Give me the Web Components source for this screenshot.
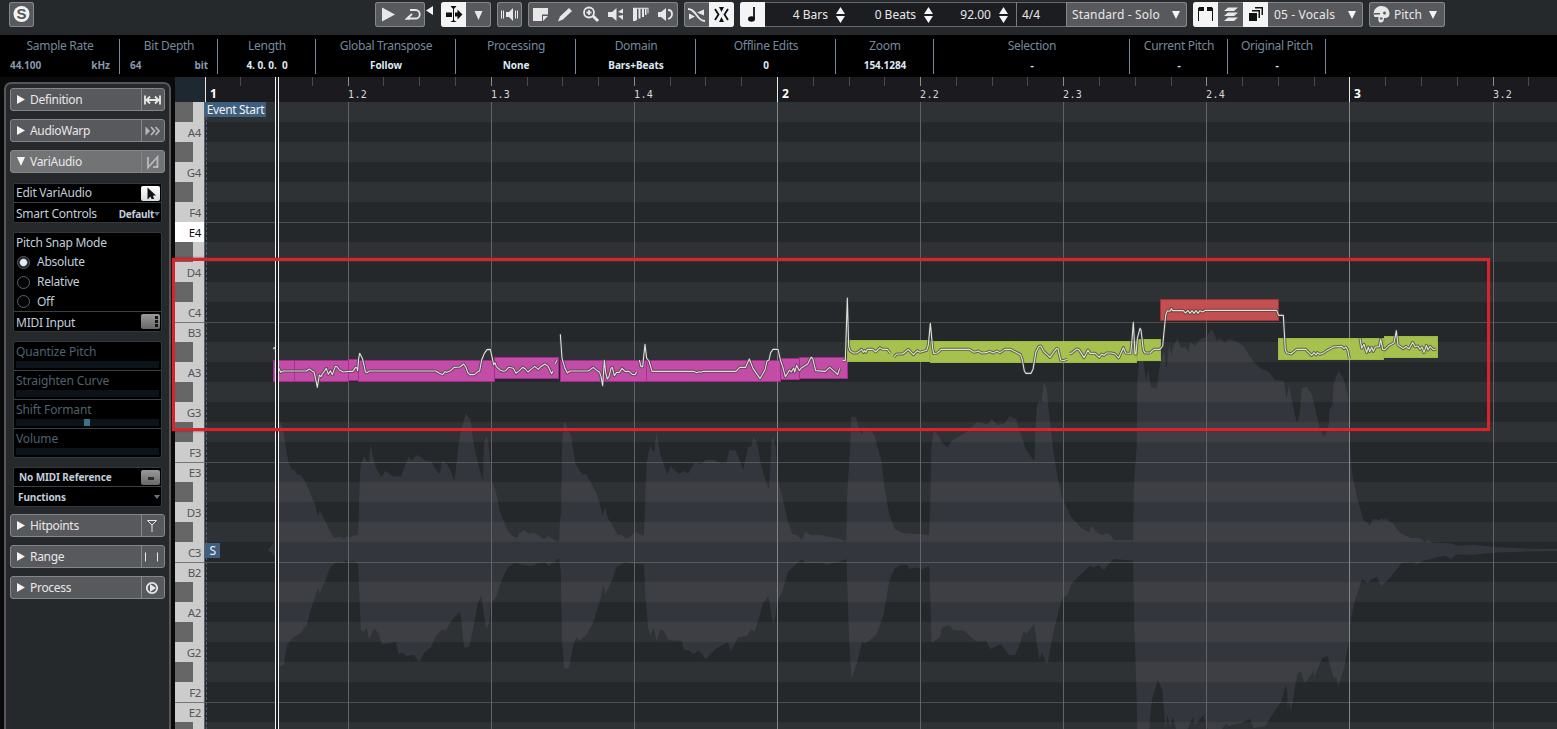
<!DOCTYPE html>
<html lang="en">
<head>
<meta charset="utf-8">
<title>Sample Editor</title>
<style>
  html, body { margin: 0; height: 100%; overflow: hidden; background: #0a0a0b; }
  body { font: 12px/16px "Noto Sans", "Open Sans", sans-serif; color: #e8e8e8; }
</style>
</head>
<body>
<sample-editor></sample-editor>

<script>
function define(name, render) {
	customElements.define(name, class extends HTMLElement {
		constructor() {
			super();
			this.attachShadow({ mode: 'open' });
		}

		connectedCallback() {
			this.shadowRoot.innerHTML = render(this);
		}
	});
}

const icons = {
	logo: '<circle cx="12.5" cy="12" r="8" fill="#f2f2f2"/><text x="12.5" y="17.3" text-anchor="middle" font-family="Liberation Sans" font-weight="bold" font-size="15" fill="#555">S</text>',
	play: '<path d="M7 5.500l13 7-13 7z"/>',
	loop: '<path d="M10 8h5.500a4.200 4.200 0 0 1 0 8.500H7l5-4.500" class="l2"/><path d="M5 17.400l5-4.400v4.400z"/>',
	autoscroll: '<path d="M5 10.500h6v4.500H5zM14 10.500h2.500V7.500l5 5-5 5v-3H14zM9.500 4h6l-2 2.500h-2zM9.500 20h6l-2-1.500h-2z"/><path d="M12.500 5v15" class="l"/>',
	down: '<path d="M8.500 9h8l-4 9z"/>',
	speaker: '<path d="M9 10h3l4-4v13l-4-4H9z"/><path d="M4.500 8.500v8M6.500 8.500v8M18.500 8.500v8M20.500 8.500v8" class="l"/>',
	range: '<path d="M5 6h15v6.500h-6V19H5z"/><path d="M15 19v-5h5z"/>',
	pencil: '<path d="M5 19.500l2-5 9-8.500 3 3-9 8.500z"/>',
	zoom: '<circle cx="11" cy="10.500" r="5" class="l2"/><path d="M15 14l5 5" class="l3"/><path d="M8.500 10.500h5M11 8v5" class="l2"/>',
	audition: '<path d="M5 10h4l4.500-4v13L9 15H5zM15 10l5-3.500v5zM15 14l5-1v5z"/>',
	warp: '<path d="M5 6h3l1 1v11l-2 1H5zM10.500 6.500h2v10h-2zM14 6.500h2v8.500h-2zM17 6.500h1.500v6.500H17zM19.500 6.500h1v5h-1z"/><path d="M5 5.800h15.500v1H5z"/>',
	scrub: '<path d="M5 10h3l5-4v13l-5-4H5z"/><path d="M15 8c3 0 4 2 4 4s-1 4-4 5" class="l2"/>',
	crossfade: '<path d="M4 7c9 0 8 12 17 12" class="l2"/><path d="M5 11.500l6 3-6 3M13 10.500l7-3v6z"/>',
	snap: '<path d="M6 7l3.500 5.500L6 18M19 7l-3.500 5.500L19 18" class="l2"/><path d="M10 5h5l-2.500 5zM10 20h5l-2.500-5z"/>',
	note: '<path d="M14 5v12" class="l2"/><ellipse cx="11.500" cy="17" rx="3.500" ry="2.800"/>',
	bounds: '<path d="M5.500 19V6h5M14.500 6h5v13" class="l"/><path d="M6 5h5v4H6zM14 5h5v4h-5z"/>',
	layers: '<path d="M10 5.500h10L16 9H6zM10 10.500h10L16 14H6zM10 15.500h10L16 19H6z"/>',
	parts: '<path d="M6 11h8v8H6zM9 8h8v8h-1.500V9.500H9zM12 5h8v8h-1.500V6.500H12z"/>',
	palette: '<path d="M12 4c5 0 8.500 3 8.500 7.500 0 4-3 5-5.500 4.500 0 4-2 4.500-3.500 4.500-2 0-2.500-2-2-5.500H5.500C3 9 7 4 12 4z"/><circle cx="15.500" cy="11" r="1.500" fill="#58595c"/><path d="M5 11h6v1.500H5zM11 15.500h2.500v2H11z" fill="#58595c"/>',
	definition: '<path d="M3 7.500v9M18 7.500v9M4.500 12h12M8 8.500L4.500 12 8 15.500M13 8.500l3.500 3.500-3.500 3.500" class="l2"/>',
	chevrons: '<path d="M3.500 7.500l4.500 4.500-4.500 4.500z" opacity=".65"/><path d="M9 8l3.500 4L9 16M13.500 8l3.500 4-3.500 4" class="l2" opacity=".65"/>',
	vari: '<path d="M6 7v10.500L15.500 7v10.500" class="l2" opacity=".6"/><path d="M11 17h5" class="l2" opacity=".6"/>',
	hitpoint: '<path d="M5.500 6.500h9L10 11zM10 10v8" class="l"/>',
	selection: '<path d="M3.500 7.500v9M15.500 7.500v9" class="l"/>',
	process: '<circle cx="10" cy="12" r="5.200" class="l2"/><path d="M8 8l6 4-6 4z"/>'
};

define('ui-icon', (el) => `
	<style>
		:host { display: block; width: 25px; height: 25px; flex: none; }
		svg { display: block; fill: currentColor; }
		.l, .l2, .l3 { fill: none; stroke: currentColor; stroke-width: 1; }
		.l2 { stroke-width: 1.8; }
		.l3 { stroke-width: 3; }
	</style>
	<svg width="25" height="25" viewBox="0 0 25 25">${icons[el.getAttribute('name')]}</svg>
`);

define('tool-group', () => `
	<style>
		:host {
			display: flex;
			box-sizing: border-box;
			height: 25px;
			border-radius: 3px;
			background: #58595c;
			box-shadow: inset 0 0 0 1px #85868a;
			overflow: hidden;
			flex: none;
		}
		::slotted(ui-icon[on]) { background: #f4f4f4; color: #101112; }
	</style>
	<slot></slot>
`);

define('tool-label', () => `
	<style>
		:host { display: flex; align-items: center; height: 25px; box-sizing: border-box; padding: 0 7px 0 6px; white-space: nowrap; justify-content: space-between; letter-spacing: .15px; }
		i { border: 4px solid transparent; border-top: 8px solid #f4f4f4; border-bottom: 0; }
	</style>
	<slot></slot><i></i>
`);

define('spin-field', () => `
	<style>
		:host { display: flex; align-items: center; justify-content: flex-end; box-sizing: border-box; height: 25px; gap: 8px; white-space: nowrap; }
		svg { display: block; fill: #f4f4f4; }
	</style>
	<slot></slot><svg width="9" height="16"><path d="M0 7l4.500-7L9 7zM0 9l4.500 7L9 9z"/></svg>
`);

define('tool-bar', () => `
	<style>
		:host { display: flex; height: 35px; padding-top: 2px; box-sizing: border-box; background: #25292b; }
		.mark { width: 16px; height: 25px; flex: none; }
		.fields { display: flex; width: 301px; box-sizing: border-box; background: #1c1d20; box-shadow: inset 0 1px #66686b, inset 0 -1px #66686b; }
		.sig { border-left: 1px solid #77797c; padding: 0 0 0 5px; line-height: 25px; }
		.scheme { border-left: 1px solid #85868a; padding-left: 5px; }
		tool-group + tool-group { margin-left: 6px; }
	</style>
	<tool-group style="margin-left:9px"><ui-icon name="logo"></ui-icon></tool-group>
	<tool-group style="margin-left:341px"><ui-icon name="play"></ui-icon><ui-icon name="loop"></ui-icon></tool-group>
	<svg class="mark"><path d="M8 4v9L1 8.500z" fill="#f4f4f4"/></svg>
	<tool-group><ui-icon name="autoscroll" on></ui-icon><ui-icon name="down"></ui-icon></tool-group>
	<tool-group><ui-icon name="speaker"></ui-icon></tool-group>
	<tool-group>
		<ui-icon name="range"></ui-icon><ui-icon name="pencil"></ui-icon><ui-icon name="zoom"></ui-icon>
		<ui-icon name="audition"></ui-icon><ui-icon name="warp"></ui-icon><ui-icon name="scrub"></ui-icon>
	</tool-group>
	<tool-group><ui-icon name="crossfade"></ui-icon><ui-icon name="snap" on></ui-icon></tool-group>
	<tool-group>
		<ui-icon name="note" on></ui-icon>
		<div class="fields">
			<spin-field style="width:80px">4 Bars</spin-field>
			<spin-field style="width:88px">0 Beats</spin-field>
			<spin-field style="width:75px">92.00</spin-field>
			<span class="sig" style="margin-left:8px">4/4</span>
		</div>
		<tool-label class="scheme" style="width:121px">Standard - Solo</tool-label>
	</tool-group>
	<tool-group>
		<ui-icon name="bounds" on></ui-icon><ui-icon name="layers"></ui-icon><ui-icon name="parts" on></ui-icon>
		<tool-label style="width:95px">05 - Vocals</tool-label>
	</tool-group>
	<tool-group><ui-icon name="palette"></ui-icon><tool-label style="width:51px;padding-left:0;padding-right:8px;letter-spacing:0">Pitch</tool-label></tool-group>
`);

define('info-cell', (el) => `
	<style>
		:host { display: block; box-sizing: border-box; flex: none; height: 35px; margin-top: 4px; border-right: 1px solid #77889d; text-align: center; color: #77889b; }
		.label { line-height: 14px; letter-spacing: -.3px; padding-left: 1px; }
		.value { display: flex; justify-content: center; margin-top: 5px; font-size: 10px; line-height: 14px; font-weight: bold; color: #dfe9f5; white-space: pre; padding-left: 1px; letter-spacing: -.05px; }
		:host([unit]) .value { justify-content: space-between; padding: 0 9px 0 10px; color: #8899ad; }
	</style>
	<div class="label">${el.getAttribute('label')}</div>
	<div class="value"><slot></slot>${el.hasAttribute('unit') ? `<span>${el.getAttribute('unit')}</span>` : ''}</div>
`);

define('info-line', () => `
	<style>
		:host { display: flex; height: 42px; background: #000; }
	</style>
	<info-cell style="width:120px" label="Sample Rate" unit="kHz">44.100</info-cell>
	<info-cell style="width:98px" label="Bit Depth" unit="bit">64</info-cell>
	<info-cell style="width:98px" label="Length">4. 0. 0.  0</info-cell>
	<info-cell style="width:140px" label="Global Transpose">Follow</info-cell>
	<info-cell style="width:120px" label="Processing">None</info-cell>
	<info-cell style="width:120px" label="Domain">Bars+Beats</info-cell>
	<info-cell style="width:140px" label="Offline Edits">0</info-cell>
	<info-cell style="width:98px" label="Zoom">154.1284</info-cell>
	<info-cell style="width:196px" label="Selection">-</info-cell>
	<info-cell style="width:98px" label="Current Pitch">-</info-cell>
	<info-cell style="width:98px" label="Original Pitch">-</info-cell>
`);

define('section-head', (el) => `
	<style>
		:host { display: flex; box-sizing: border-box; height: 23px; margin: 0 -3px 8px; border: 1px solid #85868a; border-radius: 3px; background: #58595c; letter-spacing: -.3px; line-height: 21px; }
		:host([open]) { background: #727374; }
		.arrow { width: 19px; }
		.name { flex: 1; }
		.icon { width: 22px; height: 21px; border-left: 1px solid #85868a; overflow: hidden; }
		ui-icon { margin-top: -1px; }
	</style>
	<svg class="arrow" viewBox="0 0 19 21" fill="#f4f4f4"><path d="${el.hasAttribute('open') ? 'M6 6h8l-4 9z' : 'M6 6v9l8-4.500z'}"/></svg>
	<span class="name"><slot></slot></span>
	<div class="icon"><ui-icon name="${el.getAttribute('icon')}"></ui-icon></div>
`);

define('param-box', () => `
	<style>
		:host { display: block; box-sizing: border-box; margin-bottom: 9px; border: 1px solid #33383d; border-radius: 2px; background: #000; color: #c2cedb; letter-spacing: -.25px; }
		::slotted(*) { box-sizing: border-box; display: flex; align-items: center; padding: 0 1px 0 2px; }
		::slotted(.rule) { border-bottom: 1px solid #3a4147; }
		::slotted(.low) { padding-top: 2px; }
		::slotted(.bold) { font-size: 10px; font-weight: bold; padding-left: 4px; }
	</style>
	<slot></slot>
`);

define('radio-option', (el) => `
	<style>
		:host { gap: 7px; }
		i { width: 11px; height: 11px; margin-left: 1px; border: 1px solid #5a626c; border-radius: 50%; background: ${el.hasAttribute('checked') ? 'radial-gradient(#e4ebf5 0 3px, #17191c 4.500px)' : '#050505'}; }
	</style>
	<i></i><slot></slot>
`);

define('param-slider', (el) => `
	<style>
		:host { flex-direction: column; align-items: stretch !important; height: 29px; color: #50626e; line-height: 19px; letter-spacing: -.1px; }
		.track { height: 7px; width: 143px; background: #0c141a; }
		.thumb { width: 6px; height: 7px; margin-left: 68px; background: #3b7384; }
	</style>
	<slot></slot><div class="track">${el.hasAttribute('thumb') ? '<div class="thumb"></div>' : ''}</div>
`);

define('mini-button', (el) => `
	<style>
		:host { display: block; width: 19px; height: 15px; margin-left: auto; border-radius: 2px; background: linear-gradient(#999, #686868); }
		:host([kind=edit]) { background: linear-gradient(#fff, #d8dce0); }
		svg { display: block; }
	</style>
	<svg width="19" height="15">${{
		edit: '<path d="M6.500 1.500v12l3-3 1 2.500h2.500l-1-3.500h3z" fill="#111"/>',
		midi: '<path d="M14 2h3v3h-3zM14 6h3v3h-3zM14 10h3v3h-3z" fill="#111"/>',
		minus: '<path d="M7 7h6v3H7z" fill="#2c2c2c"/>'
	}[el.getAttribute('kind')]}</svg>
`);

define('side-panel', () => `
	<style>
		:host { display: block; box-sizing: border-box; width: 167px; margin: 5px 4px 0 4px; padding: 4px 7px 0 7px; border: 2px solid #55575b; border-bottom: 0; border-radius: 7px 7px 0 0; background: #25292b; flex: none; }
		.caret { border: 3px solid transparent; border-top: 4px solid #657887; border-bottom: 0; margin-left: auto; }
		.default { font-size: 10px; font-weight: bold; margin-left: auto; }
	</style>
	<section-head icon="definition">Definition</section-head>
	<section-head icon="chevrons">AudioWarp</section-head>
	<section-head icon="vari" open style="margin-bottom:10px">VariAudio</section-head>
	<param-box>
		<div class="rule" style="height:19px">Edit VariAudio<mini-button kind="edit"></mini-button></div>
		<div class="low" style="height:19px">Smart Controls<span class="default">Default</span><span class="caret" style="margin-left:0"></span></div>
	</param-box>
	<param-box>
		<div style="height:19px">Pitch Snap Mode</div>
		<radio-option checked style="height:20px">Absolute</radio-option>
		<radio-option style="height:20px">Relative</radio-option>
		<radio-option class="rule" style="height:20px">Off</radio-option>
		<div class="low" style="height:19px">MIDI Input<mini-button kind="midi" style="margin-top:-2px"></mini-button></div>
	</param-box>
	<param-box>
		<param-slider class="rule">Quantize Pitch</param-slider>
		<param-slider class="rule">Straighten Curve</param-slider>
		<param-slider class="rule" thumb>Shift Formant</param-slider>
		<param-slider style="height:28px">Volume</param-slider>
	</param-box>
	<param-box style="margin-bottom:7px;letter-spacing:-.1px">
		<div class="rule bold" style="height:19px;padding-left:5px">No MIDI Reference<mini-button kind="minus"></mini-button></div>
		<div class="bold" style="height:19px">Functions<span class="caret"></span></div>
	</param-box>
	<section-head icon="hitpoint">Hitpoints</section-head>
	<section-head icon="selection">Range</section-head>
	<section-head icon="process">Process</section-head>
`);

// x of a sixteenth on the time axis
const timeX = (i) => Math.floor(205 + i * 35.78);

define('time-ruler', () => {
	let marks = '';
	for (let i = 0; i < 38; i++) {
		const x = timeX(i);
		if (i % 16 === 0) {
			marks += `<path d="M${x + .5} 0v25" stroke="#e8e8e8"/><text x="${x + 5}" y="21" class="bar">${i / 16 + 1}</text>`;
		} else if (i % 4 === 0) {
			marks += `<path d="M${x + .5} 0v9" stroke="#8c8c8e"/><text x="${x}" y="21">${Math.floor(i / 16) + 1}.${i % 16 / 4 + 1}</text>`;
		} else {
			marks += `<path d="M${x + .5} 0v9" stroke="#4a4a4d"/>`;
		}
	}
	return `
	<style>
		:host { display: block; height: 25px; background: #1b1b1f; }
		svg { display: block; }
		text { font: 10px "DejaVu Sans Mono", monospace; fill: #d8d8d8; letter-spacing: .4px; }
		.bar { font: bold 12px "Noto Sans", sans-serif; fill: #fff; }
	</style>
	<svg width="1382" height="25" viewBox="175 0 1382 25"><path d="M175 0h30v25h-30z" fill="#1d2831"/>${marks}</svg>
	`;
});

// 32 semitones, A#4 at the top down to D#2
const semitones = Array.from({ length: 32 }, (_, i) => {
	const midi = 70 - i;
	return {
		name: ['C', 'C#', 'D', 'D#', 'E', 'F', 'F#', 'G', 'G#', 'A', 'A#', 'B'][midi % 12],
		octave: Math.floor(midi / 12) - 1
	};
});

define('piano-keys', () => `
	<style>
		:host { display: block; width: 30px; flex: none; background: #ccc; overflow: hidden; border-right: 1px solid #5c6368; box-sizing: border-box; }
		div { box-sizing: border-box; height: 20px; padding-right: 3px; text-align: right; color: #555; font-size: 11.500px; line-height: 21px; letter-spacing: -.4px; }
		.sharp { width: 18px; background: #666; }
		.split { border-top: 1px solid #777; line-height: 19px; }
		.current { background: #fff; color: #111; border: 0; line-height: 21px; }
	</style>
	${semitones.map((s) => s.name.includes('#')
		? '<div class="sharp"></div>'
		: `<div class="${s.name === 'B' || s.name === 'E' ? 'split' : ''} ${s.name + s.octave === 'E4' ? 'current' : ''}">${s.name}${s.octave}</div>`).join('')}
`);

const notes = [
	['pink', 273, 360, 22], ['pink', 294, 360, 55], ['pink', 348, 359, 11], ['pink', 358, 360, 137], ['pink', 494, 357, 65],
	['pink', 560, 360, 87], ['pink', 646, 360, 135], ['pink', 780, 358, 20], ['pink', 799, 357, 49],
	['green', 847, 340, 83], ['green', 930, 341, 207], ['green', 1137, 339, 24],
	['red', 1160, 299, 119],
	['green', 1278, 338, 106], ['green', 1384, 336, 54]
];

// Pitch curves in thirds of a pixel, each group from its own origin
const curves = [
	[265, 280, [
		'25,207 28,203 31,205 34,262 41,264 47,277 55,273 124,273 133,267 140,272 147,276 152,297 157,322 163,285 168,290 172,282 184,265 190,283 196,272 202,284 211,259 217,261 223,270 235,276 250,274 263,274 272,262 276,264 278,273 281,235 284,220 292,235 297,255 301,275 306,278 313,273 513,273 522,279 533,284 540,275 545,277 557,272 567,262 585,261 596,252 603,262 608,277 614,284 628,284 636,277 644,272 650,240 658,220 666,209 676,208 682,235 686,255 690,248 694,260 705,270 715,274 722,272 731,262 745,265 753,280 763,272 773,262 781,267 789,276 798,268 809,259 820,268 827,260 840,252 850,260 860,281 864,274',
		'870,252 876,241'
	]],
	[550, 280, [
		'31,163 36,235 45,265 52,279 60,273 115,273 130,262 140,271 149,277 153,290 158,317 163,241 167,278 172,297 177,290 183,265 187,262 193,287 200,277 208,277 216,265 225,274 237,274 247,283 255,284 260,275',
		'268,240 273,260 278,260 285,193 290,235 297,243 306,274 431,274 440,278 447,275 453,277 460,274 558,274 569,262 587,262 598,237 609,265 630,296 645,270 651,243 657,240 662,218 669,208 684,208 692,243 698,260 706,290 719,270 724,276 731,264 734,276 740,256 748,272 755,263 773,252 783,232 788,235 797,272 826,274 839,262 853,274 863,284 869,265'
	]],
	[830, 280, [
		'38,241 46,241 52,54 56,200 60,212 70,219 80,219 95,208 100,217 104,212 108,217 112,208 128,208 137,216 150,203 157,208 172,208 181,220',
		'191,232 200,222 218,222 235,208 250,224 262,212 270,217 290,211 295,195 301,130 308,205 311,220 322,219 333,208 418,208 432,217 445,213 455,219 470,218 478,214 490,219 500,213 510,218 525,208 541,208 572,224 577,240 583,273 588,280 603,280 609,268 618,215 626,200 632,198 642,215 660,232 672,215 680,205 684,207 692,240 700,242 712,238',
		'718,220 724,220 740,207 747,209 762,233 774,210 780,220 795,220 808,232 815,222 822,226 830,219 845,219 855,222 866,234 880,203 887,219 902,220 906,180 910,127 915,222 918,222 922,175 930,145 933,150 940,210 945,219 960,219'
	]],
	[1120, 250, [
		'90,309 102,298 120,298 128,288 137,195 142,182 150,184 154,176 158,182 190,182 196,189 204,181 210,190 216,182 222,190 228,181 234,190 240,182 248,186 256,181 470,181 476,196 490,196 496,300 500,308 513,312 530,298 557,298 575,316 582,308 588,315 592,308 600,313 612,308 620,302 640,291 665,289 672,296 678,291 683,300 688,325',
		'720,265 725,295 732,283 740,308 745,291 749,305 755,292 760,304 766,291 778,290 782,268 788,298 795,299 805,288 822,278 829,242 834,285 850,296 858,289 867,297 878,277 885,290 894,288 900,298 906,291 912,308 919,286 924,300 930,289 940,299 949,297'
	]]
];

// Waveform envelopes: upper and lower edge, both left to right
const waves = [
	{
		at: 'translate(170 400) scale(.43367 .33333)',
		upper: '225,450 236,435 241,425 241,370 247,340 250,180 252,60 262,90 268,150 273,185 280,207 288,211 293,226 300,222 310,240 322,275 333,310 342,350 345,330 357,360 367,390 379,415 393,410 400,417 410,408 415,414 420,407 434,404 436,300 439,200 447,168 452,180 459,187 462,133 467,165 475,205 488,231 495,213 503,218 515,230 533,228 550,170 558,182 569,165 580,172 588,182 602,184 610,205 622,222 628,182 640,195 648,215 656,242 664,150 670,95 682,40 693,60 700,130 712,200 721,240 724,130 730,108 735,135 742,240 752,280 762,340 780,395 792,410 800,414 806,398 818,390 827,402 838,398 850,405 863,418 873,408 880,415 897,427 899,370 902,330 904,130 909,62 917,85 925,110 935,190 942,207 953,225 958,220 970,245 985,285 998,345 1003,322 1010,355 1020,375 1032,404 1042,405 1051,417 1063,407 1073,396 1093,408 1095,330 1099,190 1107,135 1116,160 1122,98 1130,160 1147,224 1154,198 1165,212 1175,222 1185,213 1195,220 1210,187 1225,193 1235,180 1255,180 1270,190 1283,188 1290,150 1305,152 1315,185 1322,210 1333,142 1340,140 1345,112 1354,130 1362,190 1372,235 1381,270 1387,120 1391,110 1397,140 1401,240 1412,290 1425,365 1435,402 1445,405 1457,420 1465,396 1480,406 1500,405 1545,417',
		lower: '225,450 236,460 241,470 243,590 250,700 252,800 262,795 270,735 282,715 300,700 315,675 327,620 341,565 345,580 357,545 370,500 382,488 400,487 405,480 412,486 425,484 434,492 437,600 440,690 447,695 453,682 459,717 470,687 480,697 488,732 500,732 520,725 527,762 537,758 545,768 562,764 575,787 585,760 602,742 612,710 628,688 635,693 650,660 668,637 672,660 678,743 690,740 697,700 710,610 718,585 724,650 730,687 737,665 740,610 752,590 765,540 780,500 797,488 812,495 835,498 850,490 865,487 873,498 885,487 897,475 901,515 904,720 909,808 920,803 930,735 937,712 943,722 960,705 975,670 990,610 1000,555 1003,585 1018,545 1030,500 1050,486 1070,492 1093,493 1096,580 1102,680 1107,705 1116,685 1122,722 1130,690 1137,690 1150,720 1180,722 1185,748 1198,752 1205,762 1220,752 1235,777 1260,745 1287,727 1293,755 1310,712 1330,708 1340,687 1348,695 1357,660 1367,610 1380,588 1385,630 1391,670 1396,650 1400,605 1412,575 1425,515 1440,497 1457,478 1465,490 1505,488 1515,495 1530,488 1545,485'
	},
	{
		at: 'translate(840 400) scale(.45727 .33333)',
		upper: '0,417 14,425 15,300 19,210 22,150 25,48 35,52 42,92 48,105 55,80 65,90 75,105 90,180 98,270 108,345 120,388 140,400 195,405 197,330 200,140 205,90 213,102 222,125 235,143 245,122 262,108 280,92 300,65 322,74 332,57 345,76 360,70 371,48 385,58 393,95 407,150 425,183 427,110 430,20 435,2 441,10 445,-52 452,-35 457,40 467,160 475,225 485,290 505,350 528,385 545,397 550,377 560,395 573,405 587,400 600,420 641,420 643,240 649,140 650,-50 654,-120 663,-120 669,-60 674,-93 680,-38 693,-35 701,-120 709,-145 714,-93 720,-167 725,-130 728,-160 738,-185 746,-155 755,-160 762,-145 767,-175 776,-160 787,-182 800,-188 813,-212 824,-180 832,-184 842,-172 850,-182 864,-178 884,-160 897,-128 915,-98 937,-85 951,-60 970,-58 977,0 982,-45 991,20 999,70 1005,45 1010,-35 1021,-40 1032,-15 1042,45 1050,90 1059,110 1069,75 1070,30 1077,15 1080,-50 1090,-88 1101,-65 1111,-10 1115,140 1120,220 1130,290 1145,360 1160,377 1164,357 1180,360 1185,353 1190,362 1192,353 1210,372 1225,400 1250,415 1265,413 1280,427 1287,420 1297,428 1335,430 1350,437 1385,434 1425,440 1490,445 1568,447',
		lower: '0,485 14,477 17,600 20,720 25,837 37,790 48,727 57,730 80,702 95,645 108,540 120,505 135,494 147,495 152,507 170,502 178,510 195,498 198,620 200,728 218,712 223,683 238,675 248,690 272,692 285,710 300,725 320,722 328,747 352,733 370,765 383,765 390,745 402,692 407,702 425,672 430,725 436,780 442,755 450,790 455,785 465,705 485,598 497,585 507,550 525,525 547,497 555,503 565,495 577,510 598,477 641,482 644,700 648,850 650,990 676,990 682,900 695,840 705,870 710,960 712,985 716,945 722,982 728,950 735,987 760,987 772,950 776,975 795,945 800,970 805,987 835,987 845,970 850,978 880,968 897,957 905,985 930,978 945,945 965,905 975,855 978,880 979,935 982,900 986,935 1000,822 1008,812 1015,850 1025,835 1035,812 1037,830 1055,775 1066,767 1080,835 1085,828 1090,860 1103,800 1112,730 1118,650 1127,598 1142,537 1155,550 1160,540 1173,530 1184,557 1205,530 1228,490 1255,485 1260,494 1275,483 1305,472 1325,467 1335,477 1350,463 1380,465 1430,458 1490,455 1568,453'
	}
];

define('pitch-display', () => {
	const fills = { pink: ['#cf50b0', '#b02a9c'], green: ['#afcc50', '#a5c548'], red: ['#d05253', '#a63436'] };
	let grid = '';
	for (const [i, s] of semitones.entries()) {
		const y = 102 + i * 20;
		grid += `<rect x="205" y="${y}" width="1352" height="20" fill="${s.name.includes('#') ? '#2f3235' : '#24282b'}"/>`;
		if (s.name === 'B' || s.name === 'E') grid += `<rect x="205" y="${y}" width="1352" height="1" fill="#4c4e50"/>`;
	}
	let beats = '';
	for (let i = 1; i < 10; i++) {
		beats += `<rect x="${timeX(i * 4)}" y="102" width="1" height="627" fill="${i % 4 ? '#636365' : '#858587'}"/>`;
	}
	const shapes = waves.map((w) =>
		`<polygon class="wave" transform="${w.at}" points="${w.upper} ${w.lower.split(' ').reverse().join(' ')}"/>`).join('');
	const blocks = notes.map(([kind, x, y, w]) =>
		`<rect x="${x + .5}" y="${y + .5}" width="${w - 1}" height="21" fill="${fills[kind][0]}" stroke="${fills[kind][1]}" opacity=".93"/>`).join('');
	const lines = curves.map(([x, y, runs]) =>
		`<g transform="translate(${x} ${y}) scale(.33333)">${runs.map((p) =>
			`<polyline class="halo" points="${p}"/><polyline class="curve" points="${p}"/>`).join('')}</g>`).join('');
	return `
	<style>
		:host { display: block; position: relative; width: 1352px; overflow: hidden; }
		svg { display: block; }
		.wave { fill: rgb(184 190 212 / .1); }
		.halo, .curve { fill: none; vector-effect: non-scaling-stroke; stroke-linejoin: round; }
		.halo { stroke: #3a3a3a; stroke-opacity: .7; stroke-width: 3px; }
		.curve { stroke: #e0e0dc; stroke-width: 1.100px; }
		.tag { position: absolute; left: 0; box-sizing: border-box; height: 15px; line-height: 16px; background: #3f5f7f; color: #f2f2f2; white-space: nowrap; letter-spacing: -.35px; text-align: center; }
	</style>
	<svg width="1352" height="627" viewBox="205 102 1352 627">
		${grid}
		${shapes}
		${beats}
		<path d="M206.500 102v627" stroke="#4b6274" stroke-width="1" stroke-dasharray="3 2"/>
		${blocks}
		${lines}
	</svg>
	<div class="tag" style="top:0;width:61px">Event Start</div>
	<div class="tag" style="top:441px;width:15px">S</div>
	`;
});

define('wave-editor', () => `
	<style>
		:host { display: block; position: relative; flex: 1; min-width: 0; }
		.roll { display: flex; height: 627px; }
		.cursor { position: absolute; left: 100px; top: 0; bottom: 0; width: 2px; border: solid #f4f4f4; border-width: 0 1px; background: #1c1e20; }
		.frame { position: absolute; left: -3px; top: 181px; width: 1318px; height: 173px; box-sizing: border-box; border: 3px solid #d4262d; box-shadow: 0 0 2px #8a1a20; }
	</style>
	<time-ruler></time-ruler>
	<div class="roll"><piano-keys></piano-keys><pitch-display></pitch-display></div>
	<div class="cursor"></div>
	<div class="frame"></div>
`);

define('sample-editor', () => `
	<style>
		:host { display: block; width: 1557px; height: 729px; overflow: hidden; }
		main { display: flex; height: 652px; }
	</style>
	<tool-bar></tool-bar>
	<info-line></info-line>
	<main><side-panel></side-panel><wave-editor></wave-editor></main>
`);
</script>
</body>
</html>
